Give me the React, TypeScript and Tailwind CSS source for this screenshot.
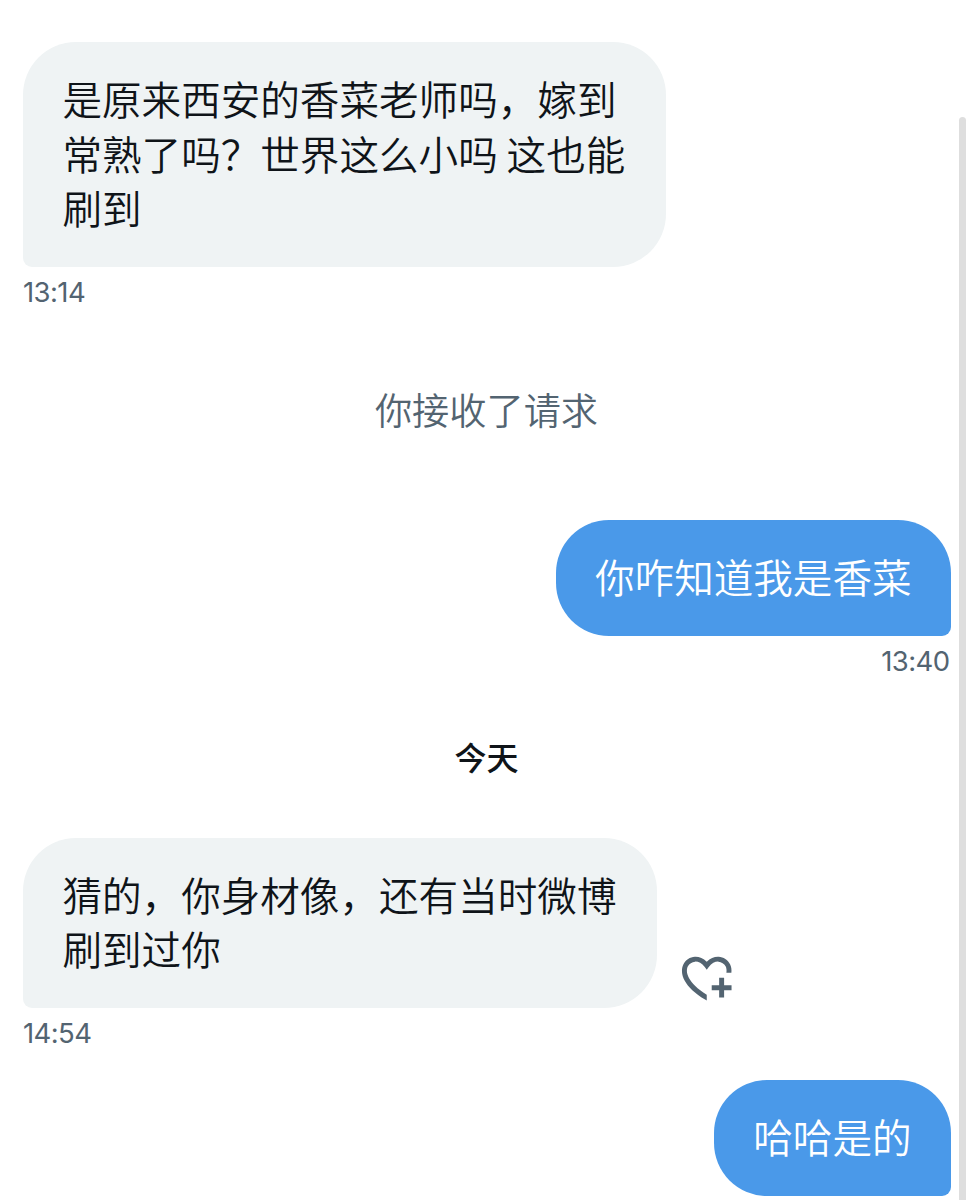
import type { ReactNode } from 'react';
import clsx from 'clsx';

interface BubbleProps {
    own?: boolean;
    children: ReactNode;
}

function Bubble({ own = false, children }: BubbleProps) {
    return (
        <div
            className={clsx(
                'pt-[29px] pb-[32.4px] text-[39.6px] leading-[54.5px] font-[350] whitespace-nowrap rounded-t-[53px]',
                own
                    ? 'px-[39.4px] bg-[#4a99e9] text-white rounded-bl-[53px] rounded-br-[9px]'
                    : 'pl-[39.4px] pr-[40.4px] bg-[#eff3f4] text-[#0f1419] rounded-br-[53px] rounded-bl-[9px]'
            )}
        >
            {children}
        </div>
    );
}

function Time({ own = false, children }: BubbleProps) {
    return (
        <time
            className={clsx(
                "block h-9 mt-[7px] font-['Inter',sans-serif] text-[27.5px] leading-9 tracking-[-0.6px] text-[#536471]",
                own && 'text-right pr-[1.5px]'
            )}
        >
            {children}
        </time>
    );
}

function ReactButton() {
    return (
        <button aria-label="添加回应" className="ml-5 text-[#536471]">
            <svg viewBox="0 0 24 24" className="block size-[59.5px]" fill="currentColor">
                <path d="M17 12v3h-2.998v2H17v3h2v-3h3.001v-2H19v-3h-2zm-5 6.839c-3.871-2.34-6.053-4.639-7.127-6.609-1.112-2.04-1.031-3.7-.479-4.82.561-1.13 1.667-1.84 2.91-1.91 1.222-.06 2.68.51 3.892 2.16l.806 1.09.805-1.09c1.211-1.65 2.668-2.22 3.89-2.16 1.242.07 2.347.78 2.908 1.91.334.677.49 1.554.321 2.59h2.011c.153-1.283-.039-2.469-.539-3.48-.887-1.79-2.647-2.91-4.601-3.01-1.65-.09-3.367.56-4.796 2.01-1.43-1.45-3.147-2.1-4.798-2.01-1.954.1-3.714 1.22-4.601 3.01-.896 1.81-.846 4.17.514 6.67 1.353 2.48 4.003 5.12 8.382 7.67l.502.299v-2.32z" />
            </svg>
        </button>
    );
}

export default function App() {
    return (
        <div
            lang="zh-CN"
            className="flex h-[1200px] w-[973px] overflow-hidden bg-white font-['Noto_Sans_CJK_SC',sans-serif]"
        >
            <main className="flex w-[951px] shrink-0 flex-col pl-[23px] pt-[42px]">
                <section className="h-[268px]">
                    <div className="flex">
                        <Bubble>
                            是原来西安的香菜老师吗，嫁到
                            <br />
                            常熟了吗？世界这么小吗 这也能
                            <br />
                            刷到
                        </Bubble>
                    </div>
                    <Time>13:14</Time>
                </section>

                <p className="mt-[74px] h-[50px] pr-px text-center text-[37.2px] leading-[50px] font-[350] text-[#536471]">
                    你接收了请求
                </p>

                <section className="mt-[86px] h-[160px]">
                    <div className="flex justify-end">
                        <Bubble own>你咋知道我是香菜</Bubble>
                    </div>
                    <Time own>13:40</Time>
                </section>

                <h2 className="mt-[51px] h-[50px] pr-px text-center text-[32px] font-medium leading-[50px] text-[#0f1419]">
                    今天
                </h2>

                <section className="mt-[56.6px] h-[214px]">
                    <div className="flex items-end">
                        <Bubble>
                            猜的，你身材像，还有当时微博
                            <br />
                            刷到过你
                        </Bubble>
                        <ReactButton />
                    </div>
                    <Time>14:54</Time>
                </section>

                <div className="mt-[28.4px] flex justify-end">
                    <Bubble own>哈哈是的</Bubble>
                </div>
            </main>

            {/* スクロールバー */}
            <div className="ml-2 mt-[117px] w-[7px] shrink-0 rounded-t-full bg-[#dedede]" />
        </div>
    );
}
